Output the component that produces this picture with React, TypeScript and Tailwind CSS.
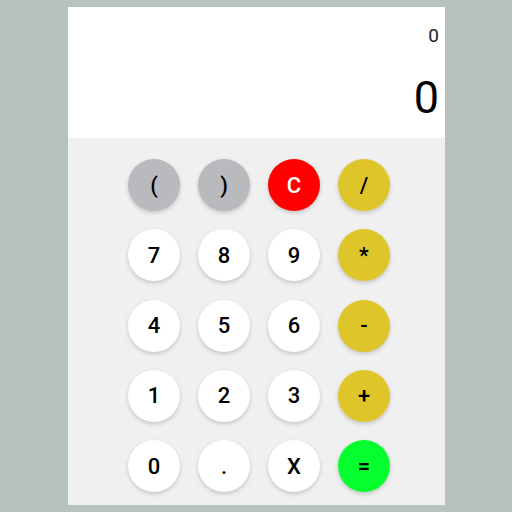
const keys: { label: string; kind: string }[] = [
  { label: "(", kind: "gray" },
  { label: ")", kind: "gray" },
  { label: "C", kind: "red" },
  { label: "/", kind: "op" },
  { label: "7", kind: "num" },
  { label: "8", kind: "num" },
  { label: "9", kind: "num" },
  { label: "*", kind: "op" },
  { label: "4", kind: "num" },
  { label: "5", kind: "num" },
  { label: "6", kind: "num" },
  { label: "-", kind: "op" },
  { label: "1", kind: "num" },
  { label: "2", kind: "num" },
  { label: "3", kind: "num" },
  { label: "+", kind: "op" },
  { label: "0", kind: "num" },
  { label: ".", kind: "num" },
  { label: "X", kind: "num" },
  { label: "=", kind: "eq" },
];

const styles: Record<string, string> = {
  gray: "bg-[#b9babe] text-black",
  red: "bg-[#ff0000] text-white",
  op: "bg-[#dec62a] text-black",
  num: "bg-white text-black",
  eq: "bg-[#05ff2e] text-black",
};

export default function App() {
  return (
    <div
      className="w-[512px] h-[512px] bg-[#b8c2bd] pt-[7px] pl-[68px]"
      style={{ fontFamily: "Roboto, 'Liberation Sans', sans-serif" }}
    >
      <div className="w-[377px] h-[498px] flex flex-col bg-[#f0f0f0]">
        {/* display */}
        <div className="h-[131px] bg-white flex flex-col items-end pr-[6px]">
          <div className="text-[19px] leading-none mt-[19px] text-[#222]">0</div>
          <div className="text-[45px] leading-none mt-[30px] text-black">0</div>
        </div>

        {/* keypad */}
        <div className="grid grid-cols-[repeat(4,52px)] gap-x-[18px] gap-y-[18.3px] pl-[60px] pt-[21px]">
          {keys.map((k, i) => (
            <button
              key={i}
              className={`w-[52px] h-[52px] rounded-full flex items-center justify-center text-[22px] font-medium shadow-[0_2px_4px_rgba(0,0,0,0.18)] ${styles[k.kind]}`}
            >
              {k.label}
            </button>
          ))}
        </div>
      </div>
    </div>
  );
}
